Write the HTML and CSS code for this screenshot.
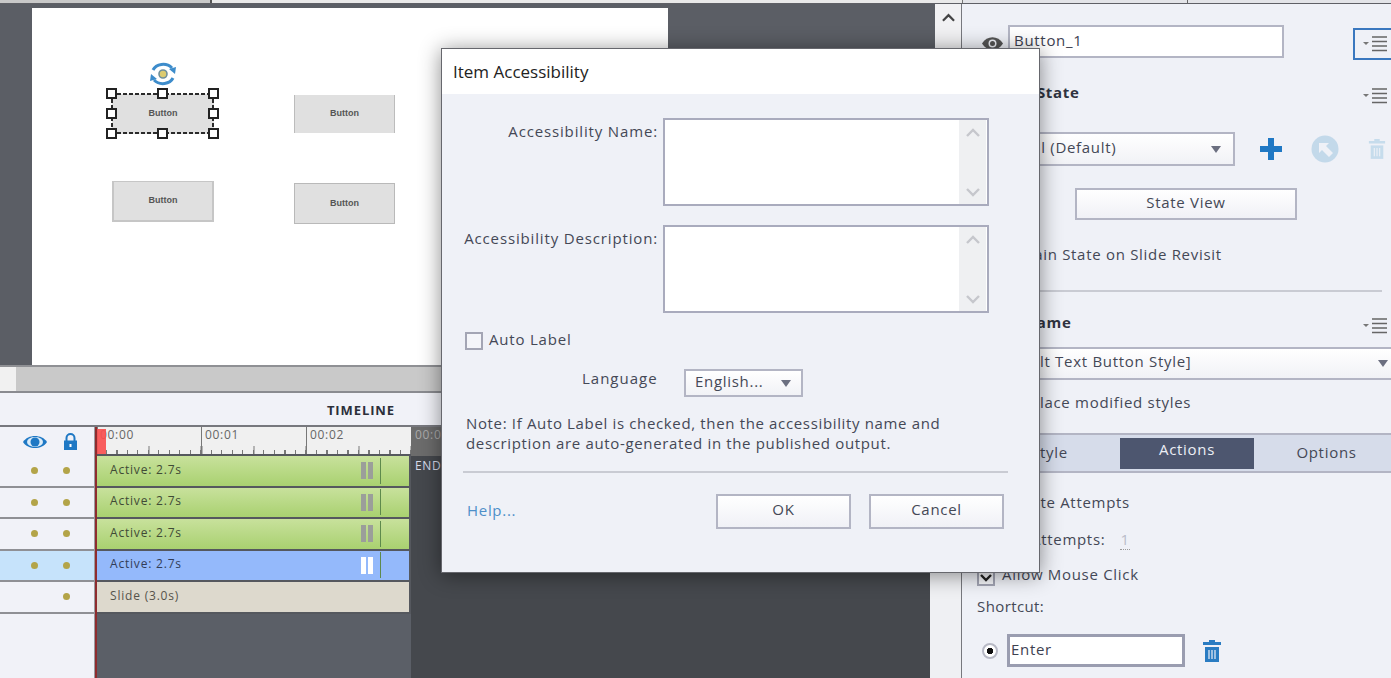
FILE: index.html
```html
<!DOCTYPE html>
<html lang="en">
<head>
    <meta charset="UTF-8">
    <title>Item Accessibility</title>
    <link rel="stylesheet" href="styles.css">
</head>
<body>
    <svg class="defs" width="0" height="0">
        <symbol id="menu-icon" viewBox="0 0 24 16">
            <path d="M0 6h6l-3 3z" fill="#777"/>
            <path d="M9 1h15M9 5.5h15M9 10h15M9 14.5h15" stroke="#666" stroke-width="1.3" fill="none"/>
        </symbol>
        <symbol id="trash-icon" viewBox="0 0 20 22">
            <path d="M7 0h6v2h6v3H1V2h6z" fill="currentColor"/>
            <path d="M3 7h14v15H3z" fill="currentColor"/>
            <path d="M7 10v9M10 10v9M13 10v9" stroke="#eff1f7" stroke-width="1.2"/>
        </symbol>
        <symbol id="arrow-down" viewBox="0 0 10 7">
            <path d="M0 0h10L5 7z" fill="#6b6f80"/>
        </symbol>
        <symbol id="chev-up" viewBox="0 0 14 9">
            <path d="M1 8l6-6 6 6" fill="none" stroke="currentColor" stroke-width="2.4"/>
        </symbol>
        <symbol id="chev-down" viewBox="0 0 14 9">
            <path d="M1 1l6 6 6-6" fill="none" stroke="currentColor" stroke-width="2.4"/>
        </symbol>
    </svg>

    <div class="topstrip">
        <div class="strip-a"></div>
        <div class="strip-b"></div>
        <div class="strip-c"></div>
        <div class="strip-d"></div>
    </div>

    <div class="app">
        <div class="main">
            <!-- stage -->
            <div class="stage">
                <div class="slide">
                    <div class="slide-btn sb1">Button</div>
                    <div class="slide-btn sb2">Button</div>
                    <div class="slide-btn sb3">Button</div>
                    <div class="slide-btn sb4">Button</div>
                    <div class="selection">
                        <i class="h h1"></i><i class="h h2"></i><i class="h h3"></i>
                        <i class="h h4"></i><i class="h h5"></i>
                        <i class="h h6"></i><i class="h h7"></i><i class="h h8"></i>
                    </div>
                    <svg class="rotate" viewBox="0 0 30 26" width="30" height="26">
                        <path d="M5 9C8 3 18 1 24 7" fill="none" stroke="#3d8ccb" stroke-width="3"/>
                        <path d="M21 8l7-2-1 7z" fill="#3d8ccb"/>
                        <path d="M25 17C22 23 12 25 6 19" fill="none" stroke="#3d8ccb" stroke-width="3"/>
                        <path d="M9 18l-7 2 1-7z" fill="#3d8ccb"/>
                        <circle cx="15" cy="13" r="4" fill="#dccb70" stroke="#6f8f9c" stroke-width="1.6"/>
                    </svg>
                </div>
                <div class="vscroll">
                    <svg class="chev-dark" width="13" height="9"><use href="#chev-up"/></svg>
                </div>
            </div>
            <div class="hscroll"><div class="hthumb"></div></div>

            <!-- timeline -->
            <div class="timeline">
                <div class="tl-title">TIMELINE</div>
                <div class="tl-body">
                    <div class="tl-left">
                        <div class="tl-icons">
                            <svg width="24" height="16" viewBox="0 0 24 16">
                                <path d="M0 8C5 0 19 0 24 8C19 16 5 16 0 8z" fill="#1f78c4"/>
                                <ellipse cx="12" cy="8" rx="8" ry="5" fill="#dcecf8"/>
                                <circle cx="12" cy="8" r="4.5" fill="#1f78c4"/>
                            </svg>
                            <svg width="15" height="17" viewBox="0 0 15 17">
                                <path d="M3.5 8V5a4 4 0 0 1 8 0v3" fill="none" stroke="#1f78c4" stroke-width="2"/>
                                <path d="M1 7.500h13V17H1z" fill="#1f78c4"/>
                                <rect x="6.500" y="11" width="2" height="3" fill="#fff"/>
                            </svg>
                        </div>
                        <div class="tl-row"><i class="dot"></i><i class="dot"></i></div>
                        <div class="tl-row"><i class="dot"></i><i class="dot"></i></div>
                        <div class="tl-row"><i class="dot"></i><i class="dot"></i></div>
                        <div class="tl-row selected"><i class="dot"></i><i class="dot"></i></div>
                        <div class="tl-row"><i class="dot empty"></i><i class="dot"></i></div>
                    </div>
                    <div class="tl-track">
                        <div class="ruler">
                            <span class="tick-label t0">00:00</span>
                            <span class="tick-label t1">00:01</span>
                            <span class="tick-label t2">00:02</span>
                            <div class="head"></div>
                        </div>
                        <div class="bar green"><span>Active: 2.7s</span><i class="pause"></i><i class="mark"></i></div>
                        <div class="bar green"><span>Active: 2.7s</span><i class="pause"></i><i class="mark"></i></div>
                        <div class="bar green"><span>Active: 2.7s</span><i class="pause"></i><i class="mark"></i></div>
                        <div class="bar blue"><span>Active: 2.7s</span><i class="pause"></i><i class="mark"></i></div>
                        <div class="bar slide-bar"><span>Slide (3.0s)</span></div>
                    </div>
                    <div class="tl-end">
                        <div class="ruler-end">00:03</div>
                        <div class="end-label">END</div>
                    </div>
                    <div class="tl-scroll"></div>
                </div>
            </div>
        </div>

        <!-- properties -->
        <div class="panel">
            <div class="name-row">
                <svg class="eye" width="21" height="13" viewBox="0 0 21 13">
                    <path d="M0 6.500C5 -2 16 -2 21 6.500C16 15 5 15 0 6.500z" fill="#555"/>
                    <circle cx="10.500" cy="6.500" r="4" fill="#eff1f7"/>
                    <circle cx="10.500" cy="6.500" r="2.500" fill="#555"/>
                </svg>
                <div class="input name-input">Button_1</div>
                <div class="menu-btn"><svg width="24" height="16"><use href="#menu-icon"/></svg></div>
            </div>
            <div class="head-row state-head">
                <b>Object State</b>
                <svg width="24" height="16"><use href="#menu-icon"/></svg>
            </div>
            <div class="state-row">
                <div class="select state-select">Normal (Default)<svg width="10" height="7"><use href="#arrow-down"/></svg></div>
                <svg class="plus" width="22" height="22" viewBox="0 0 22 22">
                    <path d="M8 0h6v8h8v6h-8v8H8v-8H0V8h8z" fill="#1f78c4"/>
                </svg>
                <svg class="go" width="28" height="28" viewBox="0 0 28 28">
                    <circle cx="14" cy="14" r="13.500" fill="#c3d9ea"/>
                    <path d="M8 8h10l-3 3 7 7-4 4-7-7-3 3z" fill="#eff1f7"/>
                </svg>
                <svg class="trash-pale" width="18" height="20"><use href="#trash-icon"/></svg>
            </div>
            <div class="btn state-view">State View</div>
            <div class="text-row retain">Retain State on Slide Revisit</div>
            <div class="rule"></div>
            <div class="head-row style-head">
                <b>Style Name</b>
                <svg width="24" height="16"><use href="#menu-icon"/></svg>
            </div>
            <div class="select style-select">[Default Text Button Style]<svg width="10" height="7"><use href="#arrow-down"/></svg></div>
            <div class="text-row replace">Replace modified styles</div>
            <div class="tabs">
                <div class="tab tab-style">Style</div>
                <div class="tab tab-actions">Actions</div>
                <div class="tab tab-options">Options</div>
            </div>
            <div class="text-row infinite">Infinite Attempts</div>
            <div class="text-row attempts">Attempts:<span class="num">1</span></div>
            <div class="text-row allow"><i class="check"><svg width="14" height="11" viewBox="0 0 14 11"><path d="M2 3l5 5 5-5" fill="none" stroke="#222" stroke-width="2.400"/></svg></i>Allow Mouse Click</div>
            <div class="text-row shortcut">Shortcut:</div>
            <div class="enter-row">
                <i class="radio"></i>
                <div class="input enter-input">Enter</div>
                <svg class="trash-blue" width="20" height="22"><use href="#trash-icon"/></svg>
            </div>
        </div>
    </div>

    <!-- dialog -->
    <div class="dialog">
        <div class="dlg-title">Item Accessibility</div>
        <div class="dlg-body">
            <div class="field">
                <label>Accessibility Name:</label>
                <div class="area">
                    <div class="area-scroll">
                        <svg width="14" height="9"><use href="#chev-up"/></svg>
                        <svg width="14" height="9"><use href="#chev-down"/></svg>
                    </div>
                </div>
            </div>
            <div class="field">
                <label>Accessibility Description:</label>
                <div class="area">
                    <div class="area-scroll">
                        <svg width="14" height="9"><use href="#chev-up"/></svg>
                        <svg width="14" height="9"><use href="#chev-down"/></svg>
                    </div>
                </div>
            </div>
            <div class="auto-row"><i class="check"></i><span>Auto Label</span></div>
            <div class="lang-row">
                <span class="lang-label">Language</span>
                <div class="select lang-select">English...<svg width="10" height="7"><use href="#arrow-down"/></svg></div>
            </div>
            <p class="note">Note: If Auto Label is checked, then the accessibility name and<br>description are auto-generated in the published output.</p>
            <div class="dlg-rule"></div>
            <div class="dlg-foot">
                <a class="help">Help...</a>
                <div class="btn dlg-btn">OK</div>
                <div class="btn dlg-btn">Cancel</div>
            </div>
        </div>
    </div>
</body>
</html>
```

FILE: styles.css
```css
* {
    box-sizing: border-box;
}

body {
    margin: 0;
    width: 1391px;
    height: 678px;
    overflow: hidden;
    position: relative;
    background-color: #5b5e65;
    font-family: "Open Sans", sans-serif;
    font-size: 14px;
    letter-spacing: 0.7px;
    color: #444856;
}

.defs {
    position: absolute;
}

i {
    display: block;
    font-style: normal;
}

/* top strip */
.topstrip {
    display: flex;
    height: 4px;
    border-bottom: 1px solid #5f6066;
}

.strip-a {
    width: 212px;
    background-color: #c9c9c9;
    border-right: 2px solid #555;
}

.strip-b {
    width: 750px;
    background-color: #e9e9e9;
}

.strip-c {
    width: 226px;
    background-color: #e3e4e8;
    border-right: 1px solid #666;
    border-left: 1px solid #777;
}

.strip-d {
    flex: 1;
    background-color: #e3e4e8;
}

.app {
    display: flex;
    height: 674px;
}

.main {
    width: 961px;
    flex: none;
    display: flex;
    flex-direction: column;
}

/* stage */
.stage {
    height: 363px;
    display: flex;
    padding: 4px 0 2px 32px;
    justify-content: space-between;
    border-bottom: 2px solid #8f9094;
}

.slide {
    width: 636px;
    height: 357px;
    background-color: #fff;
    position: relative;
}

.slide-btn {
    position: absolute;
    padding-bottom: 2px;
    background-color: #e0e0e0;
    display: flex;
    align-items: center;
    justify-content: center;
    font-family: "Liberation Sans", sans-serif;
    font-size: 9px;
    font-weight: bold;
    letter-spacing: 0;
    color: #555;
}

.sb1 { left: 80px; top: 86px; width: 102px; height: 40px; }
.sb2 { left: 262px; top: 87px; width: 101px; height: 38px; border: solid #bcbcbc; border-width: 0 1px; }
.sb3 { left: 80px; top: 173px; width: 102px; height: 41px; border: 2px solid #c6c6c6; border-top-width: 1px; }
.sb4 { left: 262px; top: 175px; width: 101px; height: 41px; border: 1px solid #b9b9b9; }

.selection {
    position: absolute;
    left: 79px;
    top: 85px;
    width: 103px;
    height: 41px;
    background-image:
        repeating-linear-gradient(90deg, #2a2a2a 0 4px, transparent 4px 6px),
        repeating-linear-gradient(90deg, #2a2a2a 0 4px, transparent 4px 6px),
        repeating-linear-gradient(#2a2a2a 0 4px, transparent 4px 6px),
        repeating-linear-gradient(#2a2a2a 0 4px, transparent 4px 6px);
    background-size: 100% 2px, 100% 2px, 2px 100%, 2px 100%;
    background-position: 0 0, 0 100%, 0 0, 100% 0;
    background-repeat: no-repeat;
}

.h {
    position: absolute;
    width: 11px;
    height: 11px;
    background-color: #fff;
    border: 2px solid #222;
}

.h1 { left: -5px; top: -5px; }
.h2 { left: 46px; top: -5px; }
.h3 { left: 97px; top: -5px; }
.h4 { left: -5px; top: 15px; }
.h5 { left: 97px; top: 15px; }
.h6 { left: -5px; top: 35px; }
.h7 { left: 46px; top: 35px; }
.h8 { left: 97px; top: 35px; }

.rotate {
    position: absolute;
    left: 116px;
    top: 53px;
}

.vscroll {
    width: 26px;
    background-color: #f1f1f3;
    margin-top: -4px;
    margin-bottom: -2px;
    display: flex;
    justify-content: center;
    padding-top: 9px;
}

.chev-dark {
    color: #444;
}

.hscroll {
    height: 26px;
    background-color: #f1f1f1;
    padding-left: 16px;
    border-bottom: 2px solid #8a8b90;
}

.hthumb {
    height: 24px;
    background-color: #c9c9c9;
}

/* timeline */
.timeline {
    flex: 1;
    display: flex;
    flex-direction: column;
}

.tl-title {
    height: 34px;
    background-color: #f1f2f8;
    border-bottom: 2px solid #77787e;
    padding-right: 566px;
    text-align: right;
    font-size: 13px;
    letter-spacing: 0.9px;
    line-height: 34px;
    font-weight: bold;
    color: #2c2f3a;
}

.tl-body {
    flex: 1;
    display: flex;
}

.tl-left {
    width: 95px;
    background-color: #f1f2f8;
    border-right: 1px solid #9a9ba0;
}

.tl-icons {
    height: 29px;
    display: flex;
    align-items: center;
    padding-left: 23px;
    gap: 16px;
}

.tl-row {
    height: 31.500px;
    display: flex;
    align-items: center;
    padding-left: 31px;
    gap: 24.500px;
    border-bottom: 2px solid #8f9095;
}

.tl-row.selected {
    background-color: #c6e3fb;
}

.dot {
    width: 7px;
    height: 7px;
    border-radius: 50%;
    background-color: #b3a448;
}

.dot.empty {
    background-color: transparent;
}

.tl-track {
    width: 316px;
    flex: none;
    background-color: #5b5f67;
    border-left: 2px solid #8e2c2e;
}

.ruler {
    height: 29px;
    position: relative;
    background-color: #f0f0f0;
    border-bottom: 2px solid #55585e;
    background-image:
        repeating-linear-gradient(90deg, #777 0 1px, transparent 1px 105px),
        repeating-linear-gradient(90deg, #777 0 1px, transparent 1px 52.500px),
        repeating-linear-gradient(90deg, #777 0 1px, transparent 1px 10.500px);
    background-size: 100% 27px, 100% 8px, 100% 4px;
    background-position: 104px 0, 51.500px 19px, 9px 23px;
    background-repeat: repeat-x;
}

.head {
    position: absolute;
    left: 0;
    top: 2px;
    width: 9px;
    height: 25px;
    background-color: rgba(248, 80, 80, 0.92);
}

.tick-label {
    position: absolute;
    top: 0;
    font-size: 12px;
    line-height: 16px;
    color: #666;
}

.t0 { left: 3px; }
.t1 { left: 108px; }
.t2 { left: 213px; }

.bar {
    height: 31.500px;
    display: flex;
    align-items: center;
    padding-left: 13px;
    border: solid #55585e;
    border-width: 0 2px 2px 0;
    font-size: 12px;
    letter-spacing: 0.8px;
    color: #404a36;
}

.bar span {
    margin-top: -3px;
}

.green {
    background: linear-gradient(#c8e19c, #a9d170);
}

.blue {
    background-color: #94b9fb;
    color: #323d58;
}

.slide-bar {
    background-color: #ddd9cd;
    color: #55534b;
}

.pause {
    width: 12px;
    height: 17px;
    margin-left: auto;
    border: solid #9b9e9a;
    border-width: 0 5px;
}

.blue .pause {
    border-color: #fff;
}

.mark {
    width: 1px;
    height: 26px;
    margin: 0 28px 0 7px;
    background-color: #5e8a4c;
}

.tl-end {
    flex: 1;
    background-color: #45484d;
}

.ruler-end {
    height: 29px;
    background-color: #6c6c6c;
    padding-left: 4px;
    font-size: 12px;
    line-height: 16px;
    color: #aaa;
}

.end-label {
    padding-left: 4px;
    font-size: 12px;
    line-height: 20px;
    color: #d6dceb;
}

.tl-scroll {
    width: 31px;
    background-color: #eff0f3;
}

/* properties panel */
.panel {
    flex: 1;
    min-width: 0;
    background-color: #eff1f7;
    border-left: 1px solid #77787e;
    padding-left: 15px;
    font-size: 15px;
}

.name-row {
    display: flex;
    margin-top: 21px;
    height: 33px;
    align-items: center;
}

.eye {
    margin-left: 5px;
    margin-top: 3px;
}

.input {
    height: 33px;
    background-color: #fff;
    border: 2px solid #b3b5c4;
    color: #3d4150;
}

.name-input {
    width: 276px;
    margin-left: 5px;
    padding-left: 4px;
    line-height: 27px;
}

.menu-btn {
    margin-left: auto;
    margin-top: 4px;
    width: 38px;
    height: 32px;
    border: 2px solid #3a78bf;
    border-right: none;
    padding: 6px 0 0 8px;
}

.head-row {
    display: flex;
    justify-content: space-between;
    align-items: center;
    height: 22px;
    padding-right: 4px;
    color: #2f3340;
}

.head-row b {
    margin-top: -2px;
    padding-left: 2px;
}

.head-row svg {
    margin-top: 5px;
    width: 24px;
}

.state-head {
    margin-top: 24px;
}

.style-head {
    margin-top: 20px;
}

.select {
    display: flex;
    align-items: center;
    justify-content: space-between;
    background: linear-gradient(#fff, #f1f2f6);
    border: 2px solid #b3b5c4;
    line-height: 24px;
    padding-bottom: 5px;
}

.select svg {
    margin-top: 5px;
}

.state-row {
    display: flex;
    align-items: center;
    height: 34px;
    margin-top: 28px;
}

.state-select {
    width: 248px;
    height: 34px;
    margin-left: 10px;
    padding-left: 0;
    padding-right: 12px;
}

.plus {
    margin-left: 25px;
}

.go {
    margin-left: 29px;
}

.trash-pale {
    margin-left: 29px;
    color: #c6dcec;
}

.btn {
    display: flex;
    align-items: center;
    justify-content: center;
    padding-bottom: 5px;
    background: linear-gradient(#fff, #f0f1f6);
    border: 2px solid #b3b5c4;
    color: #444856;
}

.state-view {
    width: 222px;
    height: 32px;
    margin: 22px 0 0 98px;
}

.text-row {
    height: 20px;
    line-height: 18px;
}

.retain {
    margin-top: 25px;
    padding-left: 32px;
}

.rule {
    height: 2px;
    margin: 25px 9px 0 0;
    background-color: #c9cbd3;
}

.style-select {
    height: 33px;
    margin-top: 13px;
    margin-left: 10px;
    padding-left: 2px;
    padding-right: 3px;
    border-width: 2px 0;
}

.replace {
    margin-top: 13px;
    padding-left: 34px;
}

.tabs {
    display: flex;
    height: 40px;
    margin: 20px 0 0 -15px;
    padding-top: 3px;
    background-color: #d6dcea;
    border: solid #b3b5c4;
    border-width: 2px 0;
}

.tab {
    height: 31px;
    line-height: 23px;
    text-align: center;
}

.tab-style {
    width: 158px;
    flex: none;
    padding: 3px 0 0 17px;
}

.tab-actions {
    width: 134px;
    flex: none;
    background-color: #4d566f;
    color: #eceef5;
}

.tab-options {
    flex: 1;
    padding: 3px 0 0 8px;
}

.infinite {
    margin-top: 20px;
    padding-left: 24px;
}

.attempts {
    margin-top: 17px;
    padding-left: 54px;
}

.num {
    margin-left: 15px;
    color: #b9bcc9;
    border-bottom: 1px dotted #999;
}

.allow {
    display: flex;
    margin-top: 15px;
}

.check {
    width: 18px;
    height: 18px;
    flex: none;
    background-color: #f4f5f9;
    border: 2px solid #a3a5b4;
}

.allow .check {
    margin: 3px 7px 0 0;
    padding: 2px 0 0 0;
}

.allow .check svg {
    display: block;
}

.shortcut {
    margin-top: 12px;
    letter-spacing: 0.4px;
}

.enter-row {
    display: flex;
    align-items: center;
    margin-top: 17px;
    height: 33px;
}

.radio {
    width: 16px;
    height: 16px;
    margin-left: 5px;
    border-radius: 50%;
    background: radial-gradient(#111 0 3px, #fff 3.500px);
    border: 2px solid #b7b9c5;
}

.enter-input {
    width: 178px;
    margin-left: 9px;
    padding-left: 1px;
    border: 3px solid #9a9db0;
    line-height: 25px;
}

.trash-blue {
    margin-left: 17px;
    color: #2a7cc2;
}

/* dialog */
.dialog {
    position: absolute;
    left: 441px;
    top: 48px;
    width: 599px;
    height: 525px;
    border: 1px solid #66676d;
    background-color: #eff1f7;
    box-shadow: 0 2px 20px rgba(0, 0, 0, 0.45);
}

.dlg-title {
    height: 45px;
    background-color: #fff;
    padding-left: 11px;
    font-size: 17px;
    letter-spacing: 0;
    line-height: 45px;
    color: #222;
}

.dlg-body {
    padding-top: 24px;
    font-size: 15px;
}

.field {
    display: grid;
    grid-template-columns: 216px 326px;
    column-gap: 5px;
    margin-bottom: 19px;
}

.field label {
    text-align: right;
    padding-top: 2px;
    line-height: 22px;
    letter-spacing: 0.85px;
}

.area {
    height: 88px;
    display: flex;
    justify-content: flex-end;
    background-color: #fff;
    border: 2px solid #a9abbd;
}

.area-scroll {
    width: 27px;
    margin-right: 1px;
    display: flex;
    flex-direction: column;
    justify-content: space-between;
    align-items: center;
    padding: 8px 0 7px;
    background-color: #eff0f2;
    color: #c6c7cc;
}

.auto-row {
    display: flex;
    align-items: center;
    gap: 6px;
    height: 18px;
    padding-left: 23px;
    letter-spacing: 0.8px;
}

.auto-row span {
    margin-top: -4px;
}

.lang-row {
    display: flex;
    align-items: center;
    margin-top: 19px;
    padding-left: 140px;
}

.lang-label {
    width: 102px;
    margin-top: -10px;
    letter-spacing: 1px;
}

.lang-select {
    width: 119px;
    height: 28px;
    padding-left: 9px;
    padding-right: 10px;
}

.note {
    margin: 16px 0 0 24px;
    line-height: 20px;
    letter-spacing: 0.65px;
}

.dlg-rule {
    height: 2px;
    margin: 18px 31px 0 21px;
    background-color: #c9cbd3;
}

.dlg-foot {
    display: flex;
    align-items: center;
    gap: 18px;
    margin-top: 21px;
    padding-left: 25px;
}

.help {
    width: 231px;
    margin-top: -3px;
    color: #4d8fc9;
}

.dlg-btn {
    width: 135px;
    height: 35px;
}
```
